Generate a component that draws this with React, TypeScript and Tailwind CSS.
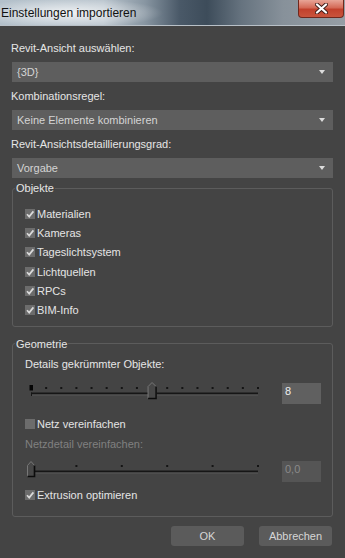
import React from "react";

const font = "[font-family:'Liberation_Sans',Arial,sans-serif]";

const Check = () => (
  <svg width="10" height="10" viewBox="0 0 10 10">
    <path d="M2 5.2 L4.2 7.6 L8.4 2.4" fill="none" stroke="#dadada" strokeWidth="1.7" />
  </svg>
);

const CheckRow = ({ label, checked = true, h = "h-[19.3px]" }: { label: string; checked?: boolean; h?: string }) => (
  <div className={`flex items-center gap-[2px] ${h}`}>
    <div className="w-[10px] h-[10px] bg-[#6c6c6c] flex items-center justify-center">{checked && <Check />}</div>
    <span className="text-[#e4e4e4]">{label}</span>
  </div>
);

const Dropdown = ({ value }: { value: string }) => (
  <div className="mt-[7px] h-[20px] bg-[#5e5e5e] flex items-center justify-between pl-[5px] pr-[8px] text-[#d4d4d4]">
    <span>{value}</span>
    <svg width="6" height="4" viewBox="0 0 6 4">
      <path d="M0 0 H6 L3 4 Z" fill="#dcdcdc" />
    </svg>
  </div>
);

const Slider = ({ ticks, pos, big }: { ticks: number; pos: number; big: boolean }) => {
  const step = 227 / ticks;
  const cx = 6 + step * pos;
  const w = big ? 4 : 3.5;
  const top = big ? 0.5 : 1.5;
  return (
    <svg width="240" height="22" viewBox="0 0 240 22">
      <rect x="6" y="10.5" width="227" height="1.5" fill="#161616" />
      <rect x="6" y="10.5" width="1" height="3.5" fill="#161616" />
      <rect x="7" y="13" width="226" height="1" fill="#4e4e4e" />
      {big && <rect x="4.5" y="3" width="3.5" height="5.5" fill="#050505" />}
      {Array.from({ length: ticks }, (_, i) => (
        <rect key={i} x={6 + step * (i + 1) - 1} y="5" width="2" height="2" fill="#141414" />
      ))}
      <path
        d={`M${cx - w} ${top + 4} L${cx} ${top} L${cx + w} ${top + 4} L${cx + w} 16.5 L${cx - w} 16.5 Z`}
        fill="#474747"
        stroke="#777"
        strokeWidth="1"
      />
      <path d={`M${cx + w} ${top + 4} L${cx + w} 16.5 L${cx - w} 16.5`} fill="none" stroke="#0c0c0c" strokeWidth="1.6" />
    </svg>
  );
};

const NumBox = ({ v, disabled }: { v: string; disabled?: boolean }) => (
  <div
    className={`w-[39px] h-[21px] mt-[1px] pl-[3px] pt-[1px] ${
      disabled ? "bg-[#555555] text-[#8a8a8a]" : "bg-[#606060] text-[#eeeeee]"
    }`}
  >
    {v}
  </div>
);

export default function App() {
  return (
    <div className={`w-[345px] h-[558px] bg-[#444444] text-[11px] leading-[14px] ${font} flex flex-col`}>
      <div className="h-[26px] shrink-0 border-b border-[#b8c0c7] flex justify-between bg-[radial-gradient(ellipse_95px_15px_at_68px_13px,rgba(255,255,255,0.8),rgba(255,255,255,0)),linear-gradient(90deg,#b3c0ca_0%,#b9c4cd_30%,#8896a2_42%,#4a5968_52%,#3d4c5a_60%,#66737f_70%,#87919a_82%,#969ea5_100%)]">
        <span className="pl-[1px] text-[12px] text-[#111] self-center">Einstellungen importieren</span>
        <div className="w-[46px] h-[18px] mr-[1px] rounded-b-[4px] border border-t-0 border-[#70281d] bg-[linear-gradient(180deg,#e8a597_0%,#d46a57_45%,#c2412c_55%,#c9543c_100%)] flex items-center justify-center">
          <svg width="13" height="11" viewBox="0 0 13 11">
            <path d="M2 1.5 L11 9.5 M11 1.5 L2 9.5" stroke="#3a1a16" strokeWidth="4" strokeLinecap="round" />
            <path d="M2 1.5 L11 9.5 M11 1.5 L2 9.5" stroke="#ffffff" strokeWidth="2.3" strokeLinecap="round" />
          </svg>
        </div>
      </div>

      <div className="px-3 pt-[15px] flex flex-col">
        <div className="ml-[-1px] text-[#e6e6e6]">Revit-Ansicht auswählen:</div>
        <Dropdown value="{3D}" />
        <div className="ml-[-1px] mt-[7px] text-[#e6e6e6]">Kombinationsregel:</div>
        <Dropdown value="Keine Elemente kombinieren" />
        <div className="ml-[-1px] mt-[7px] text-[#e6e6e6]">Revit-Ansichtsdetaillierungsgrad:</div>
        <Dropdown value="Vorgabe" />

        <fieldset className="mt-[3px] border border-[#5c5c5c] rounded-[3px] pl-[2px] pr-[11px] pb-[6px]">
          <legend className="px-[1px] text-[#e6e6e6]">Objekte</legend>
          <div className="pl-[10px] pt-[9px] flex flex-col">
            <CheckRow label="Materialien" />
            <CheckRow label="Kameras" />
            <CheckRow label="Tageslichtsystem" />
            <CheckRow label="Lichtquellen" />
            <CheckRow label="RPCs" />
            <CheckRow label="BIM-Info" />
          </div>
        </fieldset>

        <fieldset className="mt-[10px] border border-[#5c5c5c] rounded-[3px] pl-[2px] pr-[11px] pb-[12px]">
          <legend className="px-[1px] text-[#e6e6e6]">Geometrie</legend>
          <div className="pl-[10px] pt-[6px] flex flex-col">
            <div className="text-[#e6e6e6]">Details gekrümmter Objekte:</div>
            <div className="mt-[11px] h-[22px] flex justify-between">
              <Slider ticks={15} pos={8} big />
              <NumBox v="8" />
            </div>
            <div className="mt-[11px]">
              <CheckRow label="Netz vereinfachen" checked={false} h="h-[18px]" />
            </div>
            <div className="mt-[4px] text-[#808080]">Netzdetail vereinfachen:</div>
            <div className="mt-[9px] h-[22px] flex justify-between">
              <Slider ticks={5} pos={0} big={false} />
              <NumBox v="0,0" disabled />
            </div>
            <div className="mt-[4px]">
              <CheckRow label="Extrusion optimieren" h="h-[18px]" />
            </div>
          </div>
        </fieldset>

        <div className="mt-[9px] pr-[1px] flex justify-end gap-[15px]">
          <button className="w-[73px] h-[20px] rounded-[3px] bg-[#5b5b5b] text-[#d6d6d6]">OK</button>
          <button className="w-[73px] h-[20px] rounded-[3px] bg-[#5b5b5b] text-[#d6d6d6]">Abbrechen</button>
        </div>
      </div>
    </div>
  );
}
